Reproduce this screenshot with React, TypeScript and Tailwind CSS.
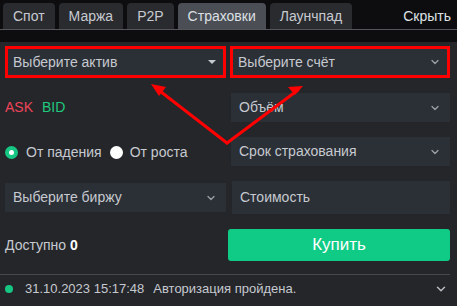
import { ChevronDown } from "lucide-react";

const tabs = ["Спот", "Маржа", "P2P", "Страховки", "Лаунчпад"];

const Select = ({ label, caret = false, outlined = false }: { label: string; caret?: boolean; outlined?: boolean }) => (
  <div
    className={`flex items-center justify-between bg-[#2b2f36] text-[#c6cad0] text-[14px] ${
      outlined ? "h-[32px] border-[3px] border-[#ff0000] pl-[5px] pr-[6px]" : "h-[29px] pl-[8px] pr-[9px]"
    }`}
  >
    <span>{label}</span>
    {caret ? (
      <span className="w-0 h-0 border-x-[4px] border-x-transparent border-t-[4px] border-t-[#c6cad0] mr-[1px]" />
    ) : (
      <ChevronDown size={12} strokeWidth={2.5} className="text-[#9ea2a8]" />
    )}
  </div>
);

export default function App() {
  return (
    <div className="relative w-[457px] h-[306px] overflow-hidden bg-[#25262a] font-['Liberation_Sans',Arial,sans-serif]">
      {/* tabs */}
      <div className="h-[30px] bg-[#0d0d0f] flex items-end border-b border-[#55565b] pl-[3px]">
        <div className="flex gap-[4px] h-[26px]">
          {tabs.map((t) => (
            <div
              key={t}
              className={`px-[10px] flex items-center rounded-t-[4px] text-[14px] ${
                t === "Страховки" ? "bg-[#4b4e55] text-[#dde0e4]" : "bg-[#2a2b2f] text-[#c6cad0]"
              }`}
            >
              {t}
            </div>
          ))}
        </div>
        <div className="ml-auto pr-[6px] h-[26px] flex items-center text-[14px] text-[#dfe2e6]">Скрыть</div>
      </div>
      <div className="h-[12px] bg-[#0d0d0f]" />

      <div className="pl-[5px] pr-[7px] pt-[4px]">
        <div className="grid grid-cols-[221px_220px] gap-x-[4px]">
          <Select label="Выберите актив" caret outlined />
          <Select label="Выберите счёт" outlined />

          <div className="mt-[15px] h-[29px] flex items-center gap-[9px] text-[14px]">
            <span className="text-[#ef4459]">ASK</span>
            <span className="text-[#1fc97e]">BID</span>
          </div>
          <div className="mt-[15px] ml-[1px]">
            <Select label="Объём" />
          </div>

          <div className="mt-[15px] h-[30px] flex items-center text-[14px] text-[#c6cad0]">
            <span className="w-[13px] h-[13px] rounded-full bg-[#16c784] flex items-center justify-center">
              <span className="w-[5px] h-[5px] rounded-full bg-white" />
            </span>
            <span className="ml-[8px]">От падения</span>
            <span className="ml-[8px] w-[13px] h-[13px] rounded-full bg-white" />
            <span className="ml-[7px]">От роста</span>
          </div>
          <div className="mt-[15px] ml-[1px] h-[30px]">
            <Select label="Срок страхования" />
          </div>

          <div className="mt-[16px] h-[30px]">
            <Select label="Выберите биржу" />
          </div>
          <div className="mt-[14px] ml-[2px] h-[33px] bg-[#2b2f36] flex items-center pl-[8px] text-[14px] text-[#c6cad0]">
            Стоимость
          </div>

          <div className="mt-[15px] h-[32px] flex items-center text-[14px] text-[#c6cad0]">
            Доступно&nbsp;<span className="font-bold text-white">0</span>
          </div>
          <button className="mt-[15px] -ml-[2px] h-[32px] rounded-[3px] bg-[#10cb86] text-white text-[17px] flex items-center justify-center">
            Купить
          </button>
        </div>
      </div>

      <div className="mt-[13px] w-[450px] h-px bg-[#48494e]" />

      <div className="h-[27px] pl-[5px] pr-[9px] flex items-center text-[13px] text-[#c6cad0]">
        <span className="w-[8px] h-[8px] rounded-full bg-[#16c784]" />
        <span className="ml-[12px]">31.10.2023 15:17:48</span>
        <span className="ml-[9px]">Авторизация пройдена.</span>
        <ChevronDown size={14} strokeWidth={2.5} className="ml-auto text-[#b9bcc2]" />
      </div>

      {/* annotation arrows */}
      <svg className="absolute inset-0 pointer-events-none" width="457" height="306" viewBox="0 0 457 306">
        <g stroke="#ff0000" strokeWidth="3" fill="none" strokeLinecap="round">
          <line x1="227" y1="143" x2="156" y2="88" />
          <line x1="227" y1="143" x2="298" y2="90" />
        </g>
        <polygon points="151,84 166,87 159,96" fill="#ff0000" />
        <polygon points="303,86 295,95 288,87" fill="#ff0000" />
      </svg>
    </div>
  );
}
